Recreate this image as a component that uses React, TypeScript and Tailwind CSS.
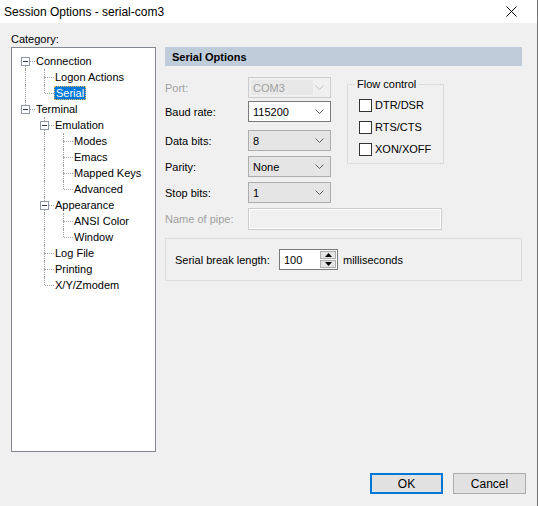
import React from 'react';

type Node = {
  label: string;
  level: number;
  // which ancestor columns still carry a vertical line
  rails: boolean[];
  expandable?: boolean;
  hasTop: boolean;
  hasBottom: boolean;
  selected?: boolean;
};

const treeNodes: Node[] = [
  { label: 'Connection', level: 0, rails: [], expandable: true, hasTop: false, hasBottom: true },
  { label: 'Logon Actions', level: 1, rails: [true], hasTop: true, hasBottom: true },
  { label: 'Serial', level: 1, rails: [true], hasTop: true, hasBottom: false, selected: true },
  { label: 'Terminal', level: 0, rails: [], expandable: true, hasTop: true, hasBottom: false },
  { label: 'Emulation', level: 1, rails: [false], expandable: true, hasTop: true, hasBottom: true },
  { label: 'Modes', level: 2, rails: [false, true], hasTop: true, hasBottom: true },
  { label: 'Emacs', level: 2, rails: [false, true], hasTop: true, hasBottom: true },
  { label: 'Mapped Keys', level: 2, rails: [false, true], hasTop: true, hasBottom: true },
  { label: 'Advanced', level: 2, rails: [false, true], hasTop: true, hasBottom: false },
  { label: 'Appearance', level: 1, rails: [false], expandable: true, hasTop: true, hasBottom: true },
  { label: 'ANSI Color', level: 2, rails: [false, true], hasTop: true, hasBottom: true },
  { label: 'Window', level: 2, rails: [false, true], hasTop: true, hasBottom: false },
  { label: 'Log File', level: 1, rails: [false], hasTop: true, hasBottom: true },
  { label: 'Printing', level: 1, rails: [false], hasTop: true, hasBottom: true },
  { label: 'X/Y/Zmodem', level: 1, rails: [false], hasTop: true, hasBottom: false },
];

const TreeRow: React.FC<{ node: Node }> = ({ node }) => (
  <div className="flex h-[16px] items-stretch">
    {node.rails.map((rail, i) => (
      <div key={i} className="relative w-[19px] flex-shrink-0">
        {rail && <div className="absolute left-[9px] top-0 h-full border-l border-dotted border-[#a0a0a0]" />}
      </div>
    ))}
    <div className="relative w-[19px] flex-shrink-0">
      {node.hasTop && <div className="absolute left-[9px] top-0 h-[8px] border-l border-dotted border-[#a0a0a0]" />}
      {node.hasBottom && <div className="absolute left-[9px] top-[8px] h-[8px] border-l border-dotted border-[#a0a0a0]" />}
      <div className="absolute left-[10px] top-[8px] w-[9px] border-t border-dotted border-[#a0a0a0]" />
      {node.expandable && (
        <div className="absolute left-[5px] top-[4px] flex h-[9px] w-[9px] items-center justify-center border border-[#8f98a8] bg-white">
          <div className="h-px w-[5px] bg-[#2a3a5a]" />
        </div>
      )}
    </div>
    <span
      className={
        node.selected
          ? 'my-[1px] flex items-center border border-dotted border-[#f0c060] bg-[#0078d7] px-[1px] leading-[12px] text-white'
          : 'ml-[1px] flex items-center leading-[16px] text-black'
      }
    >
      {node.label}
    </span>
  </div>
);

const Chevron: React.FC<{ color: string }> = ({ color }) => (
  <svg width="9" height="5" viewBox="0 0 9 5" className="flex-shrink-0">
    <polyline points="0.5,0.5 4.5,4.5 8.5,0.5" fill="none" stroke={color} strokeWidth="1" />
  </svg>
);

type ComboKind = 'disabled' | 'edit' | 'list';

const Combo: React.FC<{ value: string; kind: ComboKind }> = ({ value, kind }) => {
  if (kind === 'disabled') {
    return (
      <div className="flex h-[21px] w-[83px] items-center border border-[#cccccc] bg-[#f0f0f0] pr-[6px]">
        <div className="ml-[2px] flex h-[15px] w-[62px] items-center bg-[#e8e8e8] pl-[2px] text-[#a0a0a0]">{value}</div>
        <div className="flex-grow" />
        <Chevron color="#c0c0c0" />
      </div>
    );
  }
  if (kind === 'edit') {
    return (
      <div className="flex h-[21px] w-[83px] items-center border border-[#7a7a7a] bg-white pl-[4px] pr-[6px]">
        <span className="flex-grow">{value}</span>
        <Chevron color="#606060" />
      </div>
    );
  }
  return (
    <div className="flex h-[21px] w-[83px] items-center border border-[#adadad] bg-[#e5e5e5] pl-[4px] pr-[6px]">
      <span className="flex-grow">{value}</span>
      <Chevron color="#606060" />
    </div>
  );
};

const Checkbox: React.FC<{ label: string }> = ({ label }) => (
  <div className="flex h-[16px] items-center">
    <div className="h-[13px] w-[13px] border border-[#333333] bg-white" />
    <span className="ml-[3px]">{label}</span>
  </div>
);

const FormRow: React.FC<{ label: string; disabled?: boolean; children: React.ReactNode; className?: string }> = ({
  label,
  disabled,
  children,
  className,
}) => (
  <div className={`flex items-center ${className ?? ''}`}>
    <span className={`w-[83px] ${disabled ? 'text-[#a0a0a0]' : 'text-black'}`}>{label}</span>
    {children}
  </div>
);

const App: React.FC = () => {
  return (
    <div className="flex h-[506px] w-[538px] flex-col border-r border-[#707070] bg-[#f0f0f0] font-['Liberation_Sans',Arial,sans-serif] text-[11px] leading-[16px] text-black">
      {/* Title bar */}
      <div className="flex h-[23px] items-center bg-white pl-[4px] pr-[20px]">
        <span className="flex-grow text-[12px] text-black">Session Options - serial-com3</span>
        <svg width="11" height="11" viewBox="0 0 11 11">
          <path d="M0.5 0.5 L10.5 10.5 M10.5 0.5 L0.5 10.5" stroke="#000" strokeWidth="1" />
        </svg>
      </div>

      {/* Body */}
      <div className="flex pt-[8px]">
        {/* Category tree */}
        <div className="ml-[11px] flex w-[145px] flex-col">
          <span className="h-[16px]">Category:</span>
          <div className="h-[405px] border border-[#828790] bg-white pl-[4px] pt-[5px]">
            {treeNodes.map(node => (
              <TreeRow key={node.label} node={node} />
            ))}
          </div>
        </div>

        {/* Serial Options panel */}
        <div className="ml-[9px] mt-[16px] flex w-[357px] flex-col">
          <div className="flex h-[19px] items-center bg-[#bfcddb] pl-[7px] font-bold">Serial Options</div>

          <div className="flex">
            <div className="flex flex-col">
              <FormRow label="Port:" disabled className="mt-[11px]">
                <Combo value="COM3" kind="disabled" />
              </FormRow>
              <FormRow label="Baud rate:" className="mt-[3px]">
                <Combo value="115200" kind="edit" />
              </FormRow>
              <FormRow label="Data bits:" className="mt-[8px]">
                <Combo value="8" kind="list" />
              </FormRow>
              <FormRow label="Parity:" className="mt-[5px]">
                <Combo value="None" kind="list" />
              </FormRow>
              <FormRow label="Stop bits:" className="mt-[5px]">
                <Combo value="1" kind="list" />
              </FormRow>
            </div>

            {/* Flow control group */}
            <div className="relative ml-[16px] mt-[18px] h-[80px] w-[97px] border border-[#dcdcdc] pl-[11px] pt-[12px]">
              <span className="absolute -top-[9px] left-[7px] bg-[#f0f0f0] px-[2px]">Flow control</span>
              <div className="flex flex-col gap-[6px]">
                <Checkbox label="DTR/DSR" />
                <Checkbox label="RTS/CTS" />
                <Checkbox label="XON/XOFF" />
              </div>
            </div>
          </div>

          <FormRow label="Name of pipe:" disabled className="mt-[5px]">
            <div className="h-[22px] w-[194px] border border-[#cccccc] bg-[#f0f0f0] shadow-[inset_1px_1px_0_#ffffff,inset_-1px_-1px_0_#ffffff]" />
          </FormRow>

          {/* Serial break length group */}
          <div className="mt-[8px] flex h-[43px] w-[357px] items-center border border-[#dcdcdc] pl-[9px]">
            <span className="w-[104px]">Serial break length:</span>
            <div className="flex h-[21px] w-[59px] items-stretch border border-[#7a7a7a] bg-white">
              <span className="flex flex-grow items-center pl-[4px]">100</span>
              <div className="flex w-[17px] flex-col gap-px p-[1px] pl-0">
                <div className="flex flex-1 items-center justify-center border border-[#adadad] bg-[#e5e5e5]">
                  <svg width="7" height="4" viewBox="0 0 7 4">
                    <path d="M3.5 0 L7 4 L0 4 Z" fill="#000" />
                  </svg>
                </div>
                <div className="flex flex-1 items-center justify-center border border-[#adadad] bg-[#e5e5e5]">
                  <svg width="7" height="4" viewBox="0 0 7 4">
                    <path d="M0 0 L7 0 L3.5 4 Z" fill="#000" />
                  </svg>
                </div>
              </div>
            </div>
            <span className="ml-[5px]">milliseconds</span>
          </div>
        </div>
      </div>

      {/* Buttons */}
      <div className="mt-[21px] flex justify-end gap-[10px] pr-[11px]">
        <button className="h-[21px] w-[73px] border-2 border-[#0078d7] bg-[#e1e1e1] text-[12px] text-black">OK</button>
        <button className="h-[21px] w-[73px] border border-[#adadad] bg-[#e1e1e1] text-[12px] text-black">Cancel</button>
      </div>
    </div>
  );
};

export default App;
